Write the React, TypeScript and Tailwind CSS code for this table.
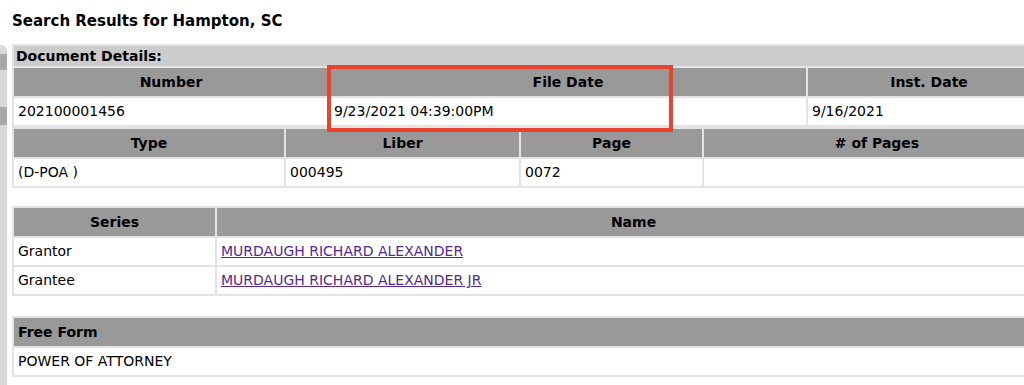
import React from 'react'

const font = { fontFamily: '"DejaVu Sans", Verdana, sans-serif' }

const th = 'h-[28px] bg-[#999999] text-[14px] font-bold text-black text-center p-0'
const td = 'h-[27px] bg-white text-[14px] text-black text-left px-[4px] py-0 whitespace-nowrap'
const table = 'w-[1040px] table-fixed border-separate border-spacing-[2px] bg-[#e3e3e3]'

export default function App() {
  return (
    <div className="relative w-screen h-[385px] overflow-hidden bg-white" style={font}>
      <div className="w-[1060px]">
        {/* Page title */}
        <h1 className="pl-[12px] pt-[11px] h-[42px] text-[15px] leading-[20px] font-bold text-black">
          Search Results for Hampton, SC
        </h1>

        <div className="flex">
          {/* sidebar edge */}
          <div className="w-[7px] shrink-0 h-[345px] mt-[3px] rounded-tr-[6px] bg-[#d8d8d8] flex flex-col">
            <div className="h-[9px]" />
            <div className="h-[16px] bg-[#a8a8a8]" />
            <div className="h-[37px]" />
            <div className="h-[18px] bg-[#a8a8a8]" />
          </div>

          <div className="ml-[5px] pt-[2px]">
            {/* Document details */}
            <table className={table}>
              <colgroup>
                <col className="w-[314px]" />
                <col className="w-[476px]" />
                <col />
              </colgroup>
              <tbody>
                <tr>
                  <td colSpan={3} className="h-[20px] bg-[#cccccc] text-[14px] font-bold px-[2px] py-0 leading-[20px]">
                    Document Details:
                  </td>
                </tr>
                <tr>
                  <th className={th}>Number</th>
                  <th className={th}>File Date</th>
                  <th className={th}>Inst. Date</th>
                </tr>
                <tr>
                  <td className={td}>202100001456</td>
                  <td className={td}>9/23/2021 04:39:00PM</td>
                  <td className={td}>9/16/2021</td>
                </tr>
              </tbody>
            </table>

            <table className={table}>
              <colgroup>
                <col className="w-[270px]" />
                <col className="w-[233px]" />
                <col className="w-[181px]" />
                <col />
              </colgroup>
              <tbody>
                <tr>
                  <th className={th}>Type</th>
                  <th className={th}>Liber</th>
                  <th className={th}>Page</th>
                  <th className={th}># of Pages</th>
                </tr>
                <tr>
                  <td className={td}>(D-POA )</td>
                  <td className={td}>000495</td>
                  <td className={td}>0072</td>
                  <td className={td}></td>
                </tr>
              </tbody>
            </table>

            {/* Parties */}
            <table className={`${table} mt-[18px]`}>
              <colgroup>
                <col className="w-[201px]" />
                <col />
              </colgroup>
              <tbody>
                <tr>
                  <th className={th}>Series</th>
                  <th className={th}>Name</th>
                </tr>
                <tr>
                  <td className={td}>Grantor</td>
                  <td className={td}>
                    <a href="#" className="text-[#57288f] underline">MURDAUGH RICHARD ALEXANDER</a>
                  </td>
                </tr>
                <tr>
                  <td className={td}>Grantee</td>
                  <td className={td}>
                    <a href="#" className="text-[#57288f] underline">MURDAUGH RICHARD ALEXANDER JR</a>
                  </td>
                </tr>
              </tbody>
            </table>

            {/* Free form */}
            <table className={`${table} mt-[20px]`}>
              <tbody>
                <tr>
                  <th className={`${th} text-left px-[4px]`}>Free Form</th>
                </tr>
                <tr>
                  <td className={td}>POWER OF ATTORNEY</td>
                </tr>
              </tbody>
            </table>
          </div>
        </div>
      </div>

      {/* highlight around the file date */}
      <div className="absolute left-[327px] top-[65px] w-[346px] h-[67px] border-4 border-[#e8432c]" />
    </div>
  )
}
